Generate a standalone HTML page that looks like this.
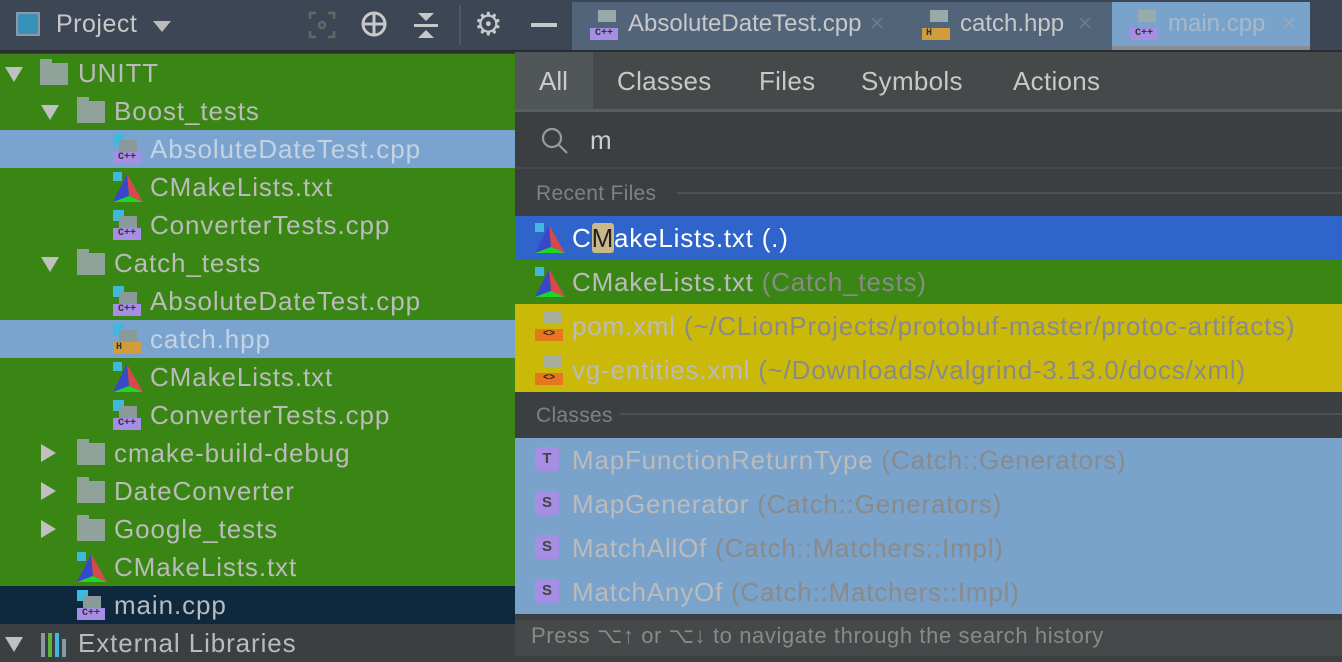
<!DOCTYPE html>
<html><head><meta charset="utf-8"><style>
*{margin:0;padding:0;box-sizing:border-box}
body{width:1342px;height:656px;overflow:hidden;background:#3c3f41;font-family:"Liberation Sans",sans-serif;color:#bbb;position:relative}
.abs{position:absolute}
.row{position:absolute;left:0;height:38px;width:515px;font-size:26px;letter-spacing:0.9px;line-height:38px;white-space:nowrap}
.tri{position:absolute;top:13px;width:0;height:0;border-left:9px solid transparent;border-right:9px solid transparent;border-top:15px solid #c0c0c0}
.tri.r{border-top:9px solid transparent;border-bottom:9px solid transparent;border-left:15px solid #c0c0c0;border-right:0;top:10px}
.fold{position:absolute;top:9px;width:28px;height:22px;background:#8fa39a}
.fold:before{content:"";position:absolute;left:0;top:-4px;width:12px;height:5px;background:#8fa39a}
.cpp{position:absolute;width:28px;height:30px}
.cpp i{position:absolute;left:0;top:0;width:11px;height:11px;background:#3fb8e0}
.cpp b{position:absolute;left:6px;top:6px;width:18px;height:12px;background:#8a9a9a}
.cpp u{position:absolute;left:0;bottom:0;width:28px;height:12px;background:#a58ee3;font:bold 10px "Liberation Mono",monospace;letter-spacing:0;color:#333;text-decoration:none;line-height:12px;text-align:center}
.cm{position:absolute;width:30px;height:30px}
.pr{position:absolute;height:44px;left:515px;width:827px;font-size:26px;letter-spacing:0.8px;line-height:44px;white-space:nowrap}
.g{color:#8a8a8a}
.sb{position:absolute;left:20px;top:9px;width:24px;height:24px;border-radius:4px;background:#a58ee3;color:#444;font-size:15px;letter-spacing:0;line-height:24px;text-align:center;font-weight:bold}
</style></head><body>
<svg width="0" height="0" style="position:absolute"><defs>
<g id="cmk"><rect x="0" y="0" width="9" height="9" fill="#3fb8e0"/><polygon points="14,2 30,30 16,24" fill="#d9484a"/><polygon points="14,2 16,24 0,30" fill="#3848c8"/><polygon points="0,30 16,24 30,30" fill="#1fd52a"/></g>
</defs></svg>
<div class="abs" style="left:0;top:0;width:1342px;height:52px;background:#3c4655"></div>
<div class="abs" style="left:0;top:50px;width:1342px;height:3px;background:#2b2e30"></div>
<div class="abs" style="left:16px;top:12px;width:24px;height:24px;border:2px solid #8d9aa6;background:#3792ba"></div>
<div class="abs" style="left:56px;top:10px;font-size:25px;letter-spacing:0.5px;color:#c8c8c8">Project</div>
<div class="abs" style="left:153px;top:21px;border-left:9px solid transparent;border-right:9px solid transparent;border-top:11px solid #bbb"></div>
<svg class="abs" style="left:308px;top:11px" width="28" height="28"><g stroke="#666" stroke-width="2.5" fill="none"><path d="M2 8V2h6M20 2h6v6M26 20v6h-6M8 26H2v-6"/><circle cx="14" cy="14" r="3"/></g></svg>
<svg class="abs" style="left:360px;top:10px" width="30" height="30"><g stroke="#c8c8c8" stroke-width="3" fill="none"><circle cx="14" cy="14" r="11"/><path d="M14 3v22M3 14h22"/></g></svg>
<svg class="abs" style="left:413px;top:11px" width="26" height="28"><g fill="#c8c8c8"><polygon points="5,2 21,2 13,10"/><rect x="1" y="13" width="24" height="3"/><polygon points="5,27 21,27 13,19"/></g></svg>
<div class="abs" style="left:459px;top:5px;width:2px;height:40px;background:#4e5862"></div>
<div class="abs" style="left:474px;top:6px;font-size:32px;color:#c8c8c8;line-height:36px">⚙</div>
<div class="abs" style="left:531px;top:23px;width:26px;height:4px;background:#c8c8c8"></div>
<div class="abs" style="left:572px;top:2px;width:540px;height:48px;background:#52647a"></div>
<div class="abs" style="left:1112px;top:2px;width:198px;height:44px;background:#7aa3cc"></div>
<div class="abs" style="left:1112px;top:46px;width:198px;height:4px;background:#8a8e92"></div>
<div class="cpp" style="left:590px;top:10px"><b style="left:8px;top:0;background:#9aa"></b><u>C++</u></div>
<div class="abs" style="left:628px;top:10px;font-size:24px;color:#c8c8c8">AbsoluteDateTest.cpp</div>
<div class="abs" style="left:870px;top:10px;font-size:24px;color:#6f7c88">×</div>
<div class="cpp" style="left:922px;top:10px"><b style="left:8px;top:0;background:#9aa"></b><u style="background:#d19d3c;text-align:left;padding-left:4px">H</u></div>
<div class="abs" style="left:960px;top:10px;font-size:24px;color:#c8c8c8">catch.hpp</div>
<div class="abs" style="left:1078px;top:10px;font-size:24px;color:#6f7c88">×</div>
<div class="cpp" style="left:1130px;top:10px"><b style="left:8px;top:0;background:#9aa"></b><u>C++</u></div>
<div class="abs" style="left:1168px;top:10px;font-size:24px;color:#a8b8c8">main.cpp</div>
<div class="abs" style="left:1282px;top:10px;font-size:24px;color:#9ab">×</div>
<div class="abs" style="left:0;top:54px;width:515px;height:532px;background:#3a8615"></div>
<div class="row" style="top:54px"><div class="tri" style="left:5px"></div><div class="fold" style="left:40px"></div><span class="abs" style="left:78px">UNITT</span></div>
<div class="row" style="top:92px"><div class="tri" style="left:41px"></div><div class="fold" style="left:77px"></div><span class="abs" style="left:114px">Boost_tests</span></div>
<div class="row" style="top:130px;background:#7aa3cf"><div class="cpp" style="left:113px;top:4px"><i></i><b></b><u>C++</u></div><span class="abs" style="left:150px;color:#c5d3e0">AbsoluteDateTest.cpp</span></div>
<div class="row" style="top:168px"><svg class="cm" style="left:113px;top:4px"><use href="#cmk"/></svg><span class="abs" style="left:150px">CMakeLists.txt</span></div>
<div class="row" style="top:206px"><div class="cpp" style="left:113px;top:4px"><i></i><b></b><u>C++</u></div><span class="abs" style="left:150px">ConverterTests.cpp</span></div>
<div class="row" style="top:244px"><div class="tri" style="left:41px"></div><div class="fold" style="left:77px"></div><span class="abs" style="left:114px">Catch_tests</span></div>
<div class="row" style="top:282px"><div class="cpp" style="left:113px;top:4px"><i></i><b></b><u>C++</u></div><span class="abs" style="left:150px">AbsoluteDateTest.cpp</span></div>
<div class="row" style="top:320px;background:#7aa3cf"><div class="cpp" style="left:113px;top:4px"><i></i><b></b><u style="background:#d19d3c;text-align:left;padding-left:3px">H</u></div><span class="abs" style="left:150px;color:#c5d3e0">catch.hpp</span></div>
<div class="row" style="top:358px"><svg class="cm" style="left:113px;top:4px"><use href="#cmk"/></svg><span class="abs" style="left:150px">CMakeLists.txt</span></div>
<div class="row" style="top:396px"><div class="cpp" style="left:113px;top:4px"><i></i><b></b><u>C++</u></div><span class="abs" style="left:150px">ConverterTests.cpp</span></div>
<div class="row" style="top:434px"><div class="tri r" style="left:41px"></div><div class="fold" style="left:77px"></div><span class="abs" style="left:114px">cmake-build-debug</span></div>
<div class="row" style="top:472px"><div class="tri r" style="left:41px"></div><div class="fold" style="left:77px"></div><span class="abs" style="left:114px">DateConverter</span></div>
<div class="row" style="top:510px"><div class="tri r" style="left:41px"></div><div class="fold" style="left:77px"></div><span class="abs" style="left:114px">Google_tests</span></div>
<div class="row" style="top:548px"><svg class="cm" style="left:77px;top:4px"><use href="#cmk"/></svg><span class="abs" style="left:114px">CMakeLists.txt</span></div>
<div class="row" style="top:586px;background:#0e293e"><div class="cpp" style="left:77px;top:4px"><i></i><b></b><u>C++</u></div><span class="abs" style="left:114px">main.cpp</span></div>
<div class="row" style="top:624px;background:#3c3f41"><div class="tri" style="left:5px"></div>
<div class="abs" style="left:41px;top:9px;width:4px;height:24px;background:#8a9aa4"></div><div class="abs" style="left:48px;top:9px;width:4px;height:24px;background:#5db53c"></div><div class="abs" style="left:55px;top:9px;width:4px;height:24px;background:#3fb8e0"></div><div class="abs" style="left:62px;top:15px;width:4px;height:18px;background:#8a9aa4"></div>
<span class="abs" style="left:78px">External Libraries</span></div>
<div class="abs" style="left:515px;top:52px;width:827px;height:604px;background:#3c3f41"></div>
<div class="abs" style="left:515px;top:52px;width:827px;height:58px;background:#45494a"></div>
<div class="abs" style="left:515px;top:52px;width:78px;height:58px;background:#515658"></div>
<div class="abs" style="left:515px;top:109px;width:827px;height:3px;background:#5a5e60"></div>
<div class="abs" style="left:539px;top:66px;font-size:26px;color:#ccc">All</div>
<div class="abs" style="left:617px;top:66px;font-size:26px;letter-spacing:0.3px;color:#c8c8c8">Classes</div>
<div class="abs" style="left:759px;top:66px;font-size:26px;letter-spacing:0.3px;color:#c8c8c8">Files</div>
<div class="abs" style="left:861px;top:66px;font-size:26px;letter-spacing:0.3px;color:#c8c8c8">Symbols</div>
<div class="abs" style="left:1013px;top:66px;font-size:26px;letter-spacing:0.3px;color:#c8c8c8">Actions</div>
<svg class="abs" style="left:541px;top:127px" width="30" height="30"><g stroke="#9a9a9a" stroke-width="2.2" fill="none"><circle cx="11" cy="11" r="9"/><path d="M18 18l8 8"/></g></svg>
<div class="abs" style="left:590px;top:125px;font-size:26px;color:#ccc">m</div>
<div class="abs" style="left:515px;top:167px;width:827px;height:2px;background:#45494a"></div>
<div class="abs" style="left:536px;top:182px;font-size:21px;letter-spacing:0.3px;color:#808080">Recent Files</div>
<div class="abs" style="left:677px;top:192px;width:665px;height:2px;background:#4d5153"></div>
<div class="pr" style="top:216px;background:#2f65ca;color:#fff"><svg class="cm" style="left:20px;top:7px"><use href="#cmk"/></svg><span class="abs" style="left:57px">C<span style="background:#c9b98a;color:#222;border-radius:3px">M</span>akeLists.txt (.)</span></div>
<div class="pr" style="top:260px;background:#3a8615"><svg class="cm" style="left:20px;top:7px"><use href="#cmk"/></svg><span class="abs" style="left:57px">CMakeLists.txt <span class="g">(Catch_tests)</span></span></div>
<div class="pr" style="top:304px;background:#cbb90a"><div class="cpp" style="left:20px;top:7px"><b style="left:8px;top:0;background:#a8ae9c"></b><u style="background:#e8761e;color:#222">&lt;&gt;</u></div><span class="abs" style="left:57px">pom.xml <span class="g">(~/CLionProjects/protobuf-master/protoc-artifacts)</span></span></div>
<div class="pr" style="top:348px;background:#cbb90a"><div class="cpp" style="left:20px;top:7px"><b style="left:8px;top:0;background:#a8ae9c"></b><u style="background:#e8761e;color:#222">&lt;&gt;</u></div><span class="abs" style="left:57px">vg-entities.xml <span class="g">(~/Downloads/valgrind-3.13.0/docs/xml)</span></span></div>
<div class="abs" style="left:536px;top:404px;font-size:21px;letter-spacing:0.3px;color:#808080">Classes</div>
<div class="abs" style="left:620px;top:413px;width:722px;height:2px;background:#4d5153"></div>
<div class="pr" style="top:438px;background:#7aa3cc"><div class="sb">T</div><span class="abs" style="left:57px">MapFunctionReturnType <span class="g">(Catch::Generators)</span></span></div>
<div class="pr" style="top:482px;background:#7aa3cc"><div class="sb">S</div><span class="abs" style="left:57px">MapGenerator <span class="g">(Catch::Generators)</span></span></div>
<div class="pr" style="top:526px;background:#7aa3cc"><div class="sb">S</div><span class="abs" style="left:57px">MatchAllOf <span class="g">(Catch::Matchers::Impl)</span></span></div>
<div class="pr" style="top:570px;background:#7aa3cc"><div class="sb">S</div><span class="abs" style="left:57px">MatchAnyOf <span class="g">(Catch::Matchers::Impl)</span></span></div>
<div class="abs" style="left:515px;top:620px;width:827px;height:36px;background:#45494a"></div>
<div class="abs" style="left:531px;top:623px;font-size:22px;letter-spacing:0.6px;color:#8a8a8a">Press ⌥↑ or ⌥↓ to navigate through the search history</div>
</body></html>
